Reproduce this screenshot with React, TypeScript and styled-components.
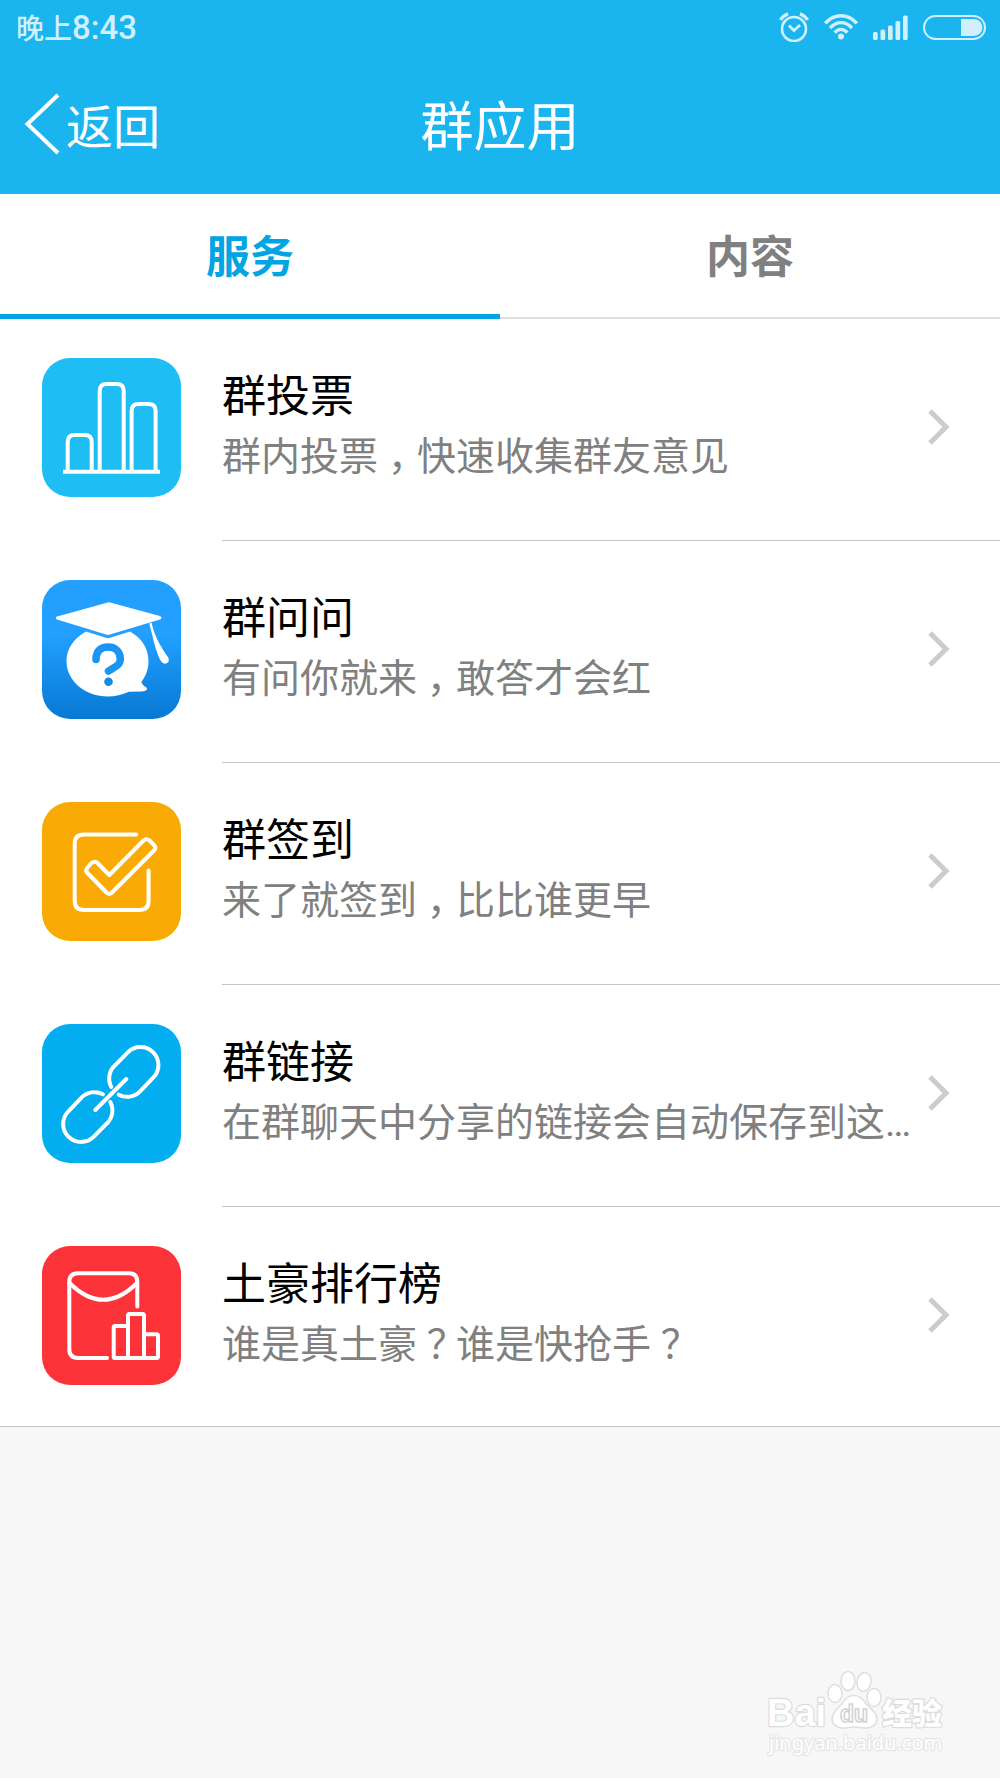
import React, { useState } from 'react';
import styled, { createGlobalStyle } from 'styled-components';

const GlobalStyle = createGlobalStyle`
  *, *::before, *::after { box-sizing: border-box; }
  body {
    margin: 0;
    background: #f7f7f7;
    font-family: "Noto Sans CJK SC", "Noto Sans", sans-serif;
  }
`;

const Page = styled.div`
  display: flex;
  flex-direction: column;
  min-height: 100vh;
`;

const Header = styled.header`
  background: #1ab4ee;
  color: #fff;
`;

const StatusBar = styled.div`
  display: flex;
  align-items: center;
  justify-content: space-between;
  height: 54px;
  padding: 0 14px 0 16px;
  color: #d1f0fc;
`;

const Clock = styled.time`
  font-size: 28px;
  line-height: 52px;
  font-weight: 500;
`;

const Digits = styled.span`
  font-family: Roboto, sans-serif;
  font-size: 33px;
`;

const StatusIcons = styled.div`
  display: flex;
  align-items: center;
  gap: 15px;

  svg { display: block; }
`;

const TitleBar = styled.div`
  display: grid;
  grid-template-columns: 1fr auto 1fr;
  align-items: center;
  height: 140px;
  padding: 0 24px 0;
`;

const BackLink = styled.a`
  display: flex;
  align-items: center;
  justify-self: start;
  gap: 6px;
  color: inherit;
  font-size: 47px;
  line-height: 60px;
  text-decoration: none;
`;

const Title = styled.h1`
  margin: 0;
  padding-bottom: 2px;
  font-size: 53px;
  line-height: 60px;
  font-weight: 400;
`;

const Tabs = styled.div`
  display: flex;
  background: #fff;
`;

const Tab = styled.button<{ $active: boolean }>`
  flex: 1;
  height: 125px;
  padding: 0 0 6px;
  border: 0;
  background: none;
  box-shadow: inset 0 ${p => (p.$active ? '-5px #02a5e3' : '-2px #dedede')};
  color: ${p => (p.$active ? '#02a5e3' : '#808080')};
  font: inherit;
  font-size: 44px;
  line-height: 60px;
  font-weight: 700;
  cursor: pointer;
`;

const List = styled.ul`
  margin: 0;
  padding: 0;
  list-style: none;
  background: #fff;
  border-bottom: 1px solid #c4c4c4;
`;

const Row = styled.a`
  display: flex;
  padding-left: 42px;
  color: inherit;
  text-decoration: none;
`;

const AppIcon = styled.svg`
  flex: none;
  width: 139px;
  height: 139px;
  margin: 39px 41px 44px 0;
  border-radius: 28px;

  li:last-child & { margin-bottom: 41px; }
`;

const RowBody = styled.div`
  display: flex;
  flex: 1;
  gap: 8px;
  min-width: 0;
  padding: 44px 50px 0 0;
  border-bottom: 1px solid #c4c4c4;

  li:last-child & { border-bottom: 0; }
`;

const Texts = styled.div`
  flex: 1;
  min-width: 0;
`;

const Name = styled.h2`
  margin: 0;
  color: #000;
  font-size: 44px;
  line-height: 60px;
  font-weight: 400;
`;

const Summary = styled.p`
  margin: 4px 0 0;
  overflow: hidden;
  color: #808080;
  font-family: Roboto, "Noto Sans CJK SC", sans-serif;
  font-size: 39px;
  line-height: 60px;
  white-space: nowrap;
  text-overflow: ellipsis;
`;

/* Full-width punctuation, centred in its own square cell. */
const Mark = styled.span`
  display: inline-flex;
  justify-content: center;
  width: 1em;
  font-feature-settings: "halt";
`;

const Chevron = styled.svg`
  flex: none;
  width: 22px;
  height: 36px;
  margin-top: 46px;
`;

const Footer = styled.footer`
  display: flex;
  justify-content: flex-end;
  margin-top: auto;
  padding: 0 52px 16px;
`;

const line = {
  fill: 'none',
  stroke: '#fff',
  strokeWidth: 4,
  strokeLinecap: 'round',
  strokeLinejoin: 'round',
} as const;

const VoteArt = () => (
  <>
    <rect width="139" height="139" fill="#1ebdf3" />
    <g {...line} strokeLinecap="butt">
      <path d="M21 113.7H118" />
      <path d="M25.7 113V84Q25.7 77 32.7 77H42.7Q49.7 77 49.7 84V113" />
      <path d="M57.7 113V33Q57.7 26 64.7 26H74.7Q81.7 26 81.7 33V113" />
      <path d="M89.6 113V53Q89.6 46 96.6 46H106.6Q113.6 46 113.6 53V113" />
    </g>
  </>
);

const AskArt = () => (
  <>
    <defs>
      <linearGradient id="ask" x1="0" y1="0" x2="0" y2="1">
        <stop offset="0.4" stopColor="#229fff" />
        <stop offset="1" stopColor="#0679d3" />
      </linearGradient>
    </defs>
    <rect width="139" height="139" fill="url(#ask)" />
    <g fill="#fff">
      <path d="M67 22.3Q68 22.3 70 23L118 36Q121 38 118 39.5L68 54.6Q66 55.2 64 54.6L15 39.5Q12.5 38 15 36.5L64 23Q66 22.3 67 22.3Z" />
      <path d="M44 51.5L64 57.8Q66 58.4 68 57.8L88 51.5C100 58 106.5 69 106.5 81C106.5 89 104 96 99.3 102C100.5 105 102.5 106.5 105 108Q105.5 111 100 111.5L87 111.8C80 115 73 116.5 66 116.5C43 116.5 24.5 101 24.5 81C24.5 69 32 58 44 51.5Z" />
      <path d="M107.3 43.5L109.6 42.8C112 55 118 66 126.5 78Q128 83 123 83.7Q119.5 83.5 117 77.5C112.5 67 110.5 55 107.3 43.5Z" />
    </g>
    <path d="M54 79.5C54 71 59 67 66 67C73.5 67 78.3 72 78.3 79C78.3 85.5 73 86.5 66.5 91" fill="none" stroke="#1b94f2" strokeWidth="7.5" strokeLinecap="round" />
    <circle cx="66.5" cy="101.7" r="4.3" fill="#138ae6" />
  </>
);

const CheckInArt = () => (
  <>
    <rect width="139" height="139" fill="#f9aa05" />
    <g {...line}>
      <path d="M94.3 32.5H42Q32.7 32.5 32.7 41.8V98.7Q32.7 108 42 108H97.3Q106.6 108 106.6 98.7V68.5" />
      <path d="M67.3 73L55.5 61Q52.7 58.5 49.5 61L45.5 65.5Q43 68.5 45.5 71L64.5 90.5Q67.3 93 70 90.5L112 48.5Q114.5 46 112 43L107.5 38.5Q104 36 101.5 38.5Z" />
    </g>
  </>
);

const linkLoop = 'M69.3 63A18 18 0 0 1 73 41.3L85.8 28.3A17.9 17.9 0 0 1 111.2 53.7L98.3 67.2A18 18 0 0 1 76.7 70.7';

const LinkArt = () => (
  <>
    <rect width="139" height="139" fill="#02adf0" />
    <g {...line}>
      <path d={linkLoop} />
      <path d={linkLoop} transform="rotate(180 68.8 70.5)" />
      <path d="M84.3 55L53.3 86" />
    </g>
  </>
);

const RankArt = () => (
  <>
    <rect width="139" height="139" fill="#fc3338" />
    <g {...line}>
      <path d="M65 112H36Q27.3 112 27.3 103V36Q27.3 27.3 36 27.3H87Q95.3 27.3 95.3 36V60.5" />
      <path d="M27.5 37Q61.3 70.5 95 37" />
      <path d="M86 112H73Q71.7 112 71.7 110.5V81.5Q71.7 80 73 80H86M86 112V69.5Q86 68 87.5 68H100.5Q102 68 102 69.5V112ZM102 88.3H114.5Q116 88.3 116 90V110.5Q116 112 114.5 112H102" />
    </g>
  </>
);

const services = [
  { name: '群投票', summary: '群内投票，快速收集群友意见', Art: VoteArt },
  { name: '群问问', summary: '有问你就来，敢答才会红', Art: AskArt },
  { name: '群签到', summary: '来了就签到，比比谁更早', Art: CheckInArt },
  { name: '群链接', summary: '在群聊天中分享的链接会自动保存到这…', Art: LinkArt },
  { name: '土豪排行榜', summary: '谁是真土豪？谁是快抢手？', Art: RankArt },
];

const tabs = ['服务', '内容'];

const withMarks = (text: string) =>
  text.split(/([，？])/).map((part, i) => (i % 2 ? <Mark key={i}>{part}</Mark> : part));

const AlarmIcon = () => (
  <svg width="30" height="30" viewBox="0 0 30 30" fill="none" stroke="currentColor">
    <circle cx="15" cy="17" r="12" strokeWidth="2.6" />
    <path d="M10 13.5L15 18.500L21 13" strokeWidth="2.8" />
    <path d="M1.500 8Q4 3.500 9 1.800M28.500 8Q26 3.500 21 1.800" strokeWidth="3.4" />
  </svg>
);

const WifiIcon = () => (
  <svg width="34" height="26" viewBox="0 0 34 26" fill="none" stroke="currentColor" strokeWidth="3.4">
    <path d="M1.2 9.3Q8 1.8 17 1.8T32.8 9.3" />
    <path d="M6 14Q11 8.6 17 8.6T28 14" />
    <path d="M10.7 18.6Q13.5 15.4 17 15.4T23.3 18.6" />
    <circle cx="17" cy="22.5" r="3" fill="currentColor" stroke="none" />
  </svg>
);

const SignalIcon = () => (
  <svg width="35" height="25" viewBox="0 0 35 25" fill="currentColor">
    {[8, 10.5, 14.5, 19, 24.5].map((h, i) => (
      <rect key={h} x={i * 7.5} y={25 - h} width="4.7" height={h} rx="1.5" />
    ))}
  </svg>
);

const BatteryIcon = () => (
  <svg width="63" height="25" viewBox="0 0 63 25">
    <rect x="1" y="1" width="61" height="23" rx="11.5" fill="none" stroke="currentColor" strokeWidth="2" />
    <path d="M38 4H51A8.5 8.5 0 0 1 51 21H38Z" fill="currentColor" />
  </svg>
);

const Watermark = () => (
  <svg width="182" height="92" viewBox="0 0 182 92" overflow="visible" role="img" aria-label="Baidu 经验 jingyan.baidu.com">
    <g fill="#fff" stroke="#dcdcdc" strokeWidth="2.4" paintOrder="stroke" strokeLinejoin="round">
      <text x="1" y="56" fontFamily="Liberation Sans, sans-serif" fontWeight="700" fontSize="38">Bai</text>
      <text x="116" y="54" fontFamily="Noto Sans CJK SC, sans-serif" fontWeight="900" fontSize="30">经验</text>
      <text x="3" y="80" fontFamily="Noto Sans, sans-serif" fontSize="20" stroke="#e6e6e6">jingyan.baidu.com</text>
    </g>
    <g fill="#fff" stroke="#dedede" strokeWidth="1.5" transform="translate(-1 -4.5)">
      <ellipse cx="70" cy="28" rx="7" ry="9" />
      <ellipse cx="83" cy="15.5" rx="7" ry="9.5" />
      <ellipse cx="99" cy="16.5" rx="7" ry="9.5" transform="rotate(12 99 16.5)" />
      <ellipse cx="109" cy="32" rx="7" ry="9" />
      <path d="M89 30C95 30 98 34 101 38C105 43 112 47 112 53C112 60 106 63 100 62.5C94 62 92 61.5 89 61.5S83 62.5 78 62.5C71 62.5 67 58 67 53C67 47 73 43 77 38C80 34 83 30 89 30Z" />
    </g>
    <text x="74" y="52" fontFamily="Liberation Sans, sans-serif" fontWeight="700" fontSize="23" fill="#fff" stroke="#d2d2d2" strokeWidth="1.5">du</text>
  </svg>
);

export default function App() {
  const [active, setActive] = useState(0);

  return (
    <Page>
      <GlobalStyle />
      <Header>
        <StatusBar>
          <Clock>晚上<Digits>8:43</Digits></Clock>
          <StatusIcons>
            <AlarmIcon />
            <WifiIcon />
            <SignalIcon />
            <BatteryIcon />
          </StatusIcons>
        </StatusBar>
        <TitleBar>
          <BackLink href="#back">
            <svg width="36" height="62" viewBox="0 0 36 62" fill="none" stroke="#fff" strokeWidth="4">
              <path d="M34 2L3.5 31L34 60" />
            </svg>
            返回
          </BackLink>
          <Title>群应用</Title>
        </TitleBar>
      </Header>
      <Tabs role="tablist">
        {tabs.map((label, i) => (
          <Tab key={label} type="button" role="tab" aria-selected={i === active} $active={i === active} onClick={() => setActive(i)}>
            {label}
          </Tab>
        ))}
      </Tabs>
      <List>
        {services.map(({ name, summary, Art }) => (
          <li key={name}>
            <Row href={`#${name}`}>
              <AppIcon viewBox="0 0 139 139" aria-hidden="true"><Art /></AppIcon>
              <RowBody>
                <Texts>
                  <Name>{name}</Name>
                  <Summary>{withMarks(summary)}</Summary>
                </Texts>
                <Chevron viewBox="0 0 22 36" fill="none" stroke="#ccc" strokeWidth="5" aria-hidden="true">
                  <path d="M2 2L18 18L2 34" />
                </Chevron>
              </RowBody>
            </Row>
          </li>
        ))}
      </List>
      <Footer>
        <Watermark />
      </Footer>
    </Page>
  );
}
